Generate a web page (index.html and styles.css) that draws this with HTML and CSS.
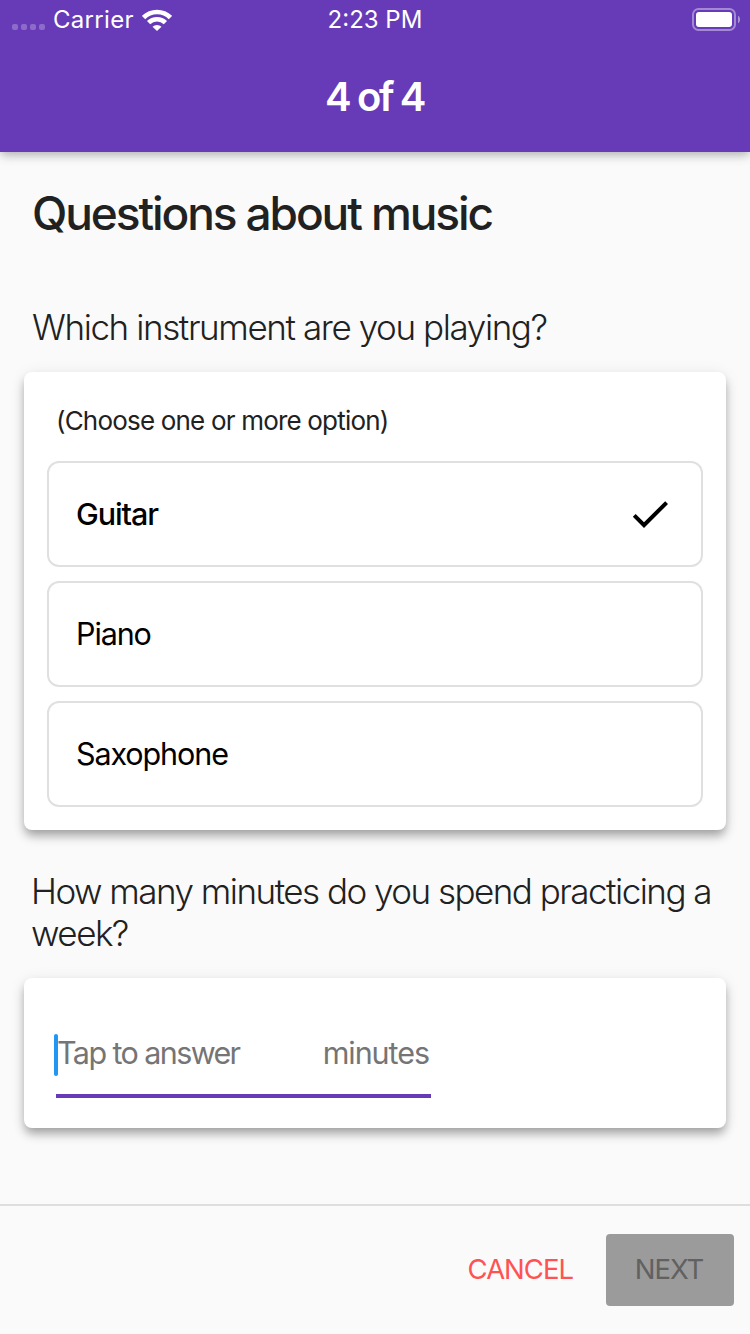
FILE: index.html
```html
<!DOCTYPE html>
<html lang="en">
<head>
<meta charset="utf-8">
<title>Survey</title>
<link rel="stylesheet" href="styles.css">
</head>
<body>
<header class="header">
  <div class="status">
    <div class="status-left">
      <span class="dots"><i></i><i></i><i></i><i></i></span>
      <span class="carrier">Carrier</span>
      <svg class="wifi" width="30" height="22" viewBox="0 0 30 22"><g fill="none" stroke="#fff" stroke-width="4.600"><path d="M1.600 8.500a19 19 0 0 1 26.800 0"/><path d="M6.600 13.700a11.900 11.900 0 0 1 16.800 0"/></g><path d="M10.500 17.800a6.500 6.500 0 0 1 9 0L15 22z" fill="#fff"/></svg>
    </div>
    <span class="clock">2:23 PM</span>
    <svg class="battery" width="48" height="23" viewBox="0 0 48 23"><rect x="1" y="1" width="42" height="21" rx="5.500" fill="none" stroke="#fff" stroke-opacity=".4" stroke-width="2"/><rect x="4" y="4" width="36" height="15" rx="3" fill="#fff"/><path d="M46 7.700c2.700 1 2.700 6.600 0 7.600z" fill="#fff" fill-opacity=".45"/></svg>
  </div>
  <h1 class="progress">4 of 4</h1>
</header>
<main class="content">
  <h2 class="title">Questions about music</h2>
  <h3 class="question">Which instrument are you playing?</h3>
  <section class="card choices">
    <p class="hint">(Choose one or more option)</p>
    <div class="option selected"><span>Guitar</span>
      <svg class="check" width="48" height="48" viewBox="0 0 24 24"><path d="M9 16.170L4.830 12l-1.420 1.410L9 19 21 7l-1.410-1.410z"/></svg></div>
    <div class="option"><span>Piano</span></div>
    <div class="option"><span>Saxophone</span></div>
  </section>
  <h3 class="question second">How many minutes do you spend practicing a<br>week?</h3>
  <section class="card answer">
    <div class="field"><i class="caret"></i><span class="placeholder">Tap to answer</span><span class="suffix">minutes</span></div>
  </section>
</main>
<footer class="footer">
  <span class="cancel">CANCEL</span>
  <span class="next">NEXT</span>
</footer>
</body>
</html>
```
FILE: styles.css
```css
* { box-sizing: border-box; }
body { margin: 0; width: 750px; height: 1334px; overflow: hidden; display: flex; flex-direction: column; background: #fafafa; font-family: Inter, sans-serif; color: #212121; }
h1, h2, h3, p { margin: 0; }
.header { height: 152px; flex: none; background: #673ab7; color: #fff; box-shadow: 0 3px 8px -2px rgba(0,0,0,.16), 0 4px 10px rgba(0,0,0,.14), 0 2px 16px rgba(0,0,0,.06); }
.status { height: 39px; display: grid; grid-template-columns: 1fr auto 1fr; align-items: center; padding: 0 10px 0 12px; font-size: 24px; }
.status-left { display: flex; align-items: center; }
.dots { display: flex; gap: 3px; margin: 15px 8px 0 0; }
.dots i { width: 6px; height: 6px; border-radius: 2px; background: rgba(255,255,255,.25); }
.carrier { letter-spacing: .3px; margin-right: 8px; }
.clock { padding-right: 2px; }
.wifi { margin-top: 1px; }
.battery { justify-self: end; }
.progress { margin-top: 34px; padding-right: 1px; line-height: 48px; text-align: center; font-size: 40px; font-weight: 600; letter-spacing: -2.4px; }
.content { flex: 1; padding: 0 24px; }
.title { margin: 33px 8px 0; line-height: 56px; font-size: 46px; font-weight: 500; letter-spacing: -2.1px; white-space: nowrap; }
.question { margin: 65px 8px 0; line-height: 42px; font-size: 35px; font-weight: 300; letter-spacing: -1.4px; white-space: nowrap; }
.card { background: #fff; border-radius: 8px; box-shadow: 0 6px 8px -2px rgba(0,0,0,.2), 0 7px 11px rgba(0,0,0,.16), 0 2px 16px rgba(0,0,0,.08); }
.choices { height: 458px; margin-top: 24px; padding: 32px 23px 0; }
.hint { margin: 0 9px 24px; line-height: 33px; font-size: 26px; letter-spacing: -.81px; }
.option { height: 106px; margin-bottom: 14px; padding: 0 27px 0 27px; border: 2px solid #e0e0e0; border-radius: 12px; display: flex; align-items: center; justify-content: space-between; color: #000; font-size: 30.5px; letter-spacing: -1.1px; }
.option span { padding-bottom: 2px; }
.selected { font-weight: 500; }
.second { margin: 40px 7px 0; letter-spacing: -1.52px; }
.answer { height: 150px; margin-top: 24px; padding: 50px 32px 0; }
.field { position: relative; width: 375px; height: 70px; border-bottom: 4px solid #673ab7; display: flex; justify-content: space-between; padding: 5px 0 0 1px; line-height: 40px; font-size: 30.5px; letter-spacing: -1.05px; color: #757575; }
.placeholder { letter-spacing: -1.6px; }
.caret { position: absolute; left: -2px; top: 6px; width: 4px; height: 42px; border-radius: 2px; background: #2196f3; }
.suffix { padding-right: 2px; }
.footer { height: 130px; flex: none; border-top: 2px solid #dedede; display: flex; align-items: center; justify-content: flex-end; padding: 0 16px; font-size: 27.5px; }
.cancel { color: #ff5252; margin-right: 33px; padding-bottom: 2px; letter-spacing: -1px; }
.next { width: 128px; height: 72px; padding-right: 2px; border-radius: 4px; background: #9b9b9b; color: #616161; line-height: 70px; text-align: center; letter-spacing: -1px; }
```
